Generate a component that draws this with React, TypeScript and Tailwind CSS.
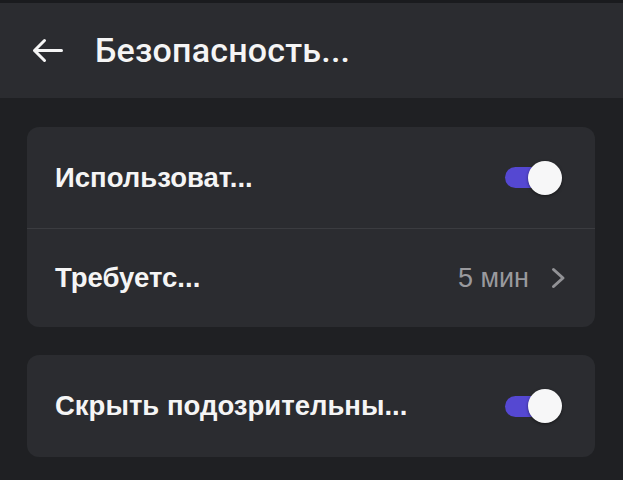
import React from "react";

function Toggle() {
  return (
    <div className="relative w-[57px] h-[34px] flex items-center">
      <div className="w-[44px] h-[21px] rounded-full bg-[#5548d2]" />
      <div className="absolute right-0 top-0 w-[34px] h-[34px] rounded-full bg-[#f7f7f8] shadow-[0_1px_3px_rgba(0,0,0,0.5)]" />
    </div>
  );
}

export default function App() {
  return (
    <div className="w-[623px] h-[480px] bg-[#1f2023] flex flex-col overflow-hidden" style={{ fontFamily: "'Liberation Sans', Arial, sans-serif" }}>
      <div className="h-[3px] bg-[#1a1b1e]" />
      <div className="h-[95px] bg-[#2b2c30] flex items-center pl-[32px]">
        <svg width="31" height="25" viewBox="0 0 31 25" fill="none" stroke="#f5f5f5" strokeWidth="3" strokeLinecap="round" strokeLinejoin="round">
          <path d="M29.5 12.5H2.5M12.5 2.5L2.5 12.5L12.5 22.5" />
        </svg>
        <span className="ml-[32px] text-[34px] font-medium text-[#f5f5f5] tracking-[0.2px]" style={{ fontFamily: "Roboto, sans-serif" }}>
          Безопасность...
        </span>
      </div>
      <div className="flex flex-col gap-[28px] px-[27px] pt-[29px] w-[623px]">
        <div className="w-[568px] rounded-[12px] bg-[#2b2c30] flex flex-col">
          <div className="h-[102px] flex items-center justify-between pl-[28px] pr-[33px] border-b border-[#3b3c40]">
            <span className="text-[27.5px] font-bold text-[#f5f5f5]">Использоват...</span>
            <Toggle />
          </div>
          <div className="h-[98px] flex items-center justify-between pl-[28px] pr-[29px]">
            <span className="text-[27.5px] font-bold text-[#f5f5f5]">Требуетс...</span>
            <div className="flex items-center gap-[22px]">
              <span className="text-[27px] text-[#9a9a9e]">5 мин</span>
              <svg width="15" height="22" viewBox="0 0 15 22" fill="none" stroke="#929296" strokeWidth="3" strokeLinecap="round" strokeLinejoin="round">
                <path d="M2.5 2.5L12 11L2.5 19.5" />
              </svg>
            </div>
          </div>
        </div>
        <div className="w-[568px] h-[102px] rounded-[12px] bg-[#2b2c30] flex items-center justify-between pl-[28px] pr-[33px]">
          <span className="text-[27.5px] font-bold text-[#f5f5f5]">Скрыть подозрительны...</span>
          <Toggle />
        </div>
      </div>
    </div>
  );
}
